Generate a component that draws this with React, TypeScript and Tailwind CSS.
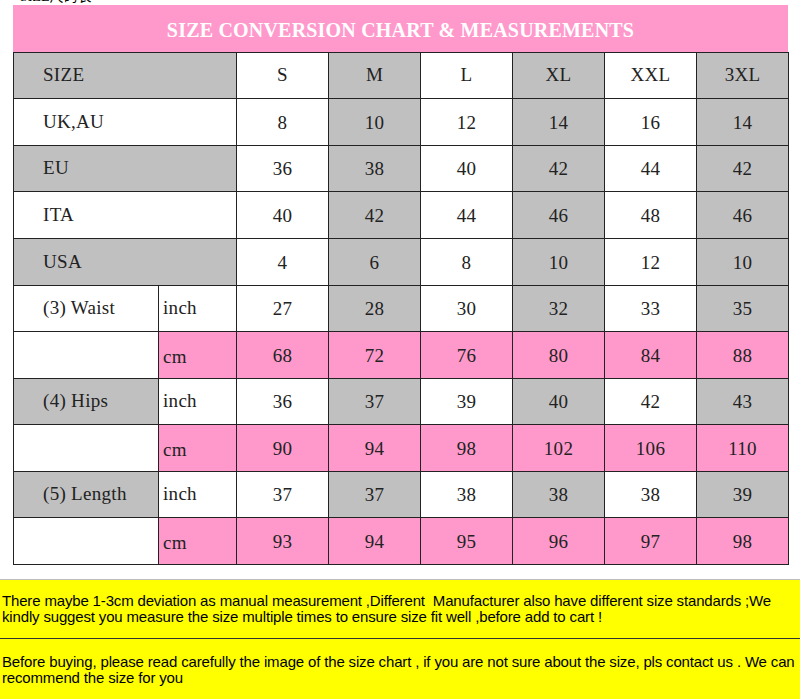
import React from "react";

const GRAY = "bg-[#c0c0c0]";
const PINK = "bg-[#ff99cc]";
const WHITE = "bg-white";

type Row = {
  label: string;
  labelBg: string;
  unit?: string;
  unitBg?: string;
  values: string[];
  pinkValues?: boolean;
  h: string;
};

const rows: Row[] = [
  { label: "UK,AU", labelBg: WHITE, values: ["8", "10", "12", "14", "16", "14"], h: "h-[47px]" },
  { label: "EU", labelBg: GRAY, values: ["36", "38", "40", "42", "44", "42"], h: "h-[46px]" },
  { label: "ITA", labelBg: WHITE, values: ["40", "42", "44", "46", "48", "46"], h: "h-[47px]" },
  { label: "USA", labelBg: GRAY, values: ["4", "6", "8", "10", "12", "10"], h: "h-[47px]" },
  { label: "(3) Waist", labelBg: WHITE, unit: "inch", unitBg: WHITE, values: ["27", "28", "30", "32", "33", "35"], h: "h-[46px]" },
  { label: "", labelBg: WHITE, unit: "cm", unitBg: PINK, values: ["68", "72", "76", "80", "84", "88"], pinkValues: true, h: "h-[47px]" },
  { label: "(4) Hips", labelBg: GRAY, unit: "inch", unitBg: WHITE, values: ["36", "37", "39", "40", "42", "43"], h: "h-[46px]" },
  { label: "", labelBg: WHITE, unit: "cm", unitBg: PINK, values: ["90", "94", "98", "102", "106", "110"], pinkValues: true, h: "h-[47px]" },
  { label: "(5) Length", labelBg: GRAY, unit: "inch", unitBg: WHITE, values: ["37", "37", "38", "38", "38", "39"], h: "h-[46px]" },
  { label: "", labelBg: WHITE, unit: "cm", unitBg: PINK, values: ["93", "94", "95", "96", "97", "98"], pinkValues: true, h: "h-[47px]" },
];

const colBg = (i: number) => (i % 2 === 1 ? GRAY : WHITE);
const cell = "border border-[#222] p-0";

export default function App() {
  return (
    <div className="w-[800px] h-[699px] bg-white overflow-hidden" style={{ fontFamily: '"Liberation Serif", "Times New Roman", serif' }}>
      <div className="h-[5px] overflow-hidden pl-[20px]">
        <div className="-mt-[11px] text-[14px] leading-[16px] text-black" style={{ fontFamily: '"Liberation Serif", "Noto Sans CJK SC", serif' }}>
          SIZE尺码表
        </div>
      </div>
      <div className="ml-[13px] w-[775px] h-[47px] bg-[#ff99cc] flex items-center justify-center pt-[2px]">
        <span className="text-white font-bold text-[20px] tracking-[0.2px]">SIZE CONVERSION CHART &amp; MEASUREMENTS</span>
      </div>
      <table className="ml-[13px] w-[775px] border-collapse table-fixed text-[19px] text-[#222] tracking-[0.3px]">
        <colgroup>
          <col className="w-[145px]" />
          <col className="w-[78px]" />
          <col className="w-[92px]" />
          <col className="w-[92px]" />
          <col className="w-[92px]" />
          <col className="w-[92px]" />
          <col className="w-[92px]" />
          <col className="w-[92px]" />
        </colgroup>
        <tbody>
          <tr className="h-[46px]">
            <td colSpan={2} className={`${cell} ${GRAY} pl-[29px] text-left`}>SIZE</td>
            {["S", "M", "L", "XL", "XXL", "3XL"].map((s, i) => (
              <td key={s} className={`${cell} ${colBg(i)} text-center`}>{s}</td>
            ))}
          </tr>
          {rows.map((r, ri) => (
            <tr key={ri} className={r.h}>
              {r.unit ? (
                <>
                  <td className={`${cell} ${r.labelBg} text-left pl-[29px]`}>{r.label}</td>
                  <td className={`${cell} ${r.unitBg} text-left pl-[4px] ${r.unit === "cm" ? "pt-[4px]" : ""}`}>{r.unit}</td>
                </>
              ) : (
                <td colSpan={2} className={`${cell} ${r.labelBg} text-left pl-[29px]`}>{r.label}</td>
              )}
              {r.values.map((v, i) => (
                <td key={i} className={`${cell} ${r.pinkValues ? PINK : colBg(i)} text-center pt-[2px]`}>{v}</td>
              ))}
            </tr>
          ))}
        </tbody>
      </table>
      <div className="mt-[14px] w-[800px] h-[121px] bg-[#ffff00] border-t border-[#bdbdbd] text-black text-[15px] leading-[16px] tracking-[-0.16px]" style={{ fontFamily: '"Liberation Sans", Arial, sans-serif' }}>
        <div className="pl-[2px] pt-[13px] h-[59px] border-b border-[#333]">
          There maybe 1-3cm deviation as manual measurement ,Different&nbsp; Manufacturer also have different size standards ;We kindly suggest you measure the size multiple times to ensure size fit well ,before add to cart !
        </div>
        <div className="pl-[2px] pt-[15px]">
          Before buying, please read carefully the image of the size chart , if you are not sure about the size, pls contact us . We can recommend the size for you
        </div>
      </div>
    </div>
  );
}
